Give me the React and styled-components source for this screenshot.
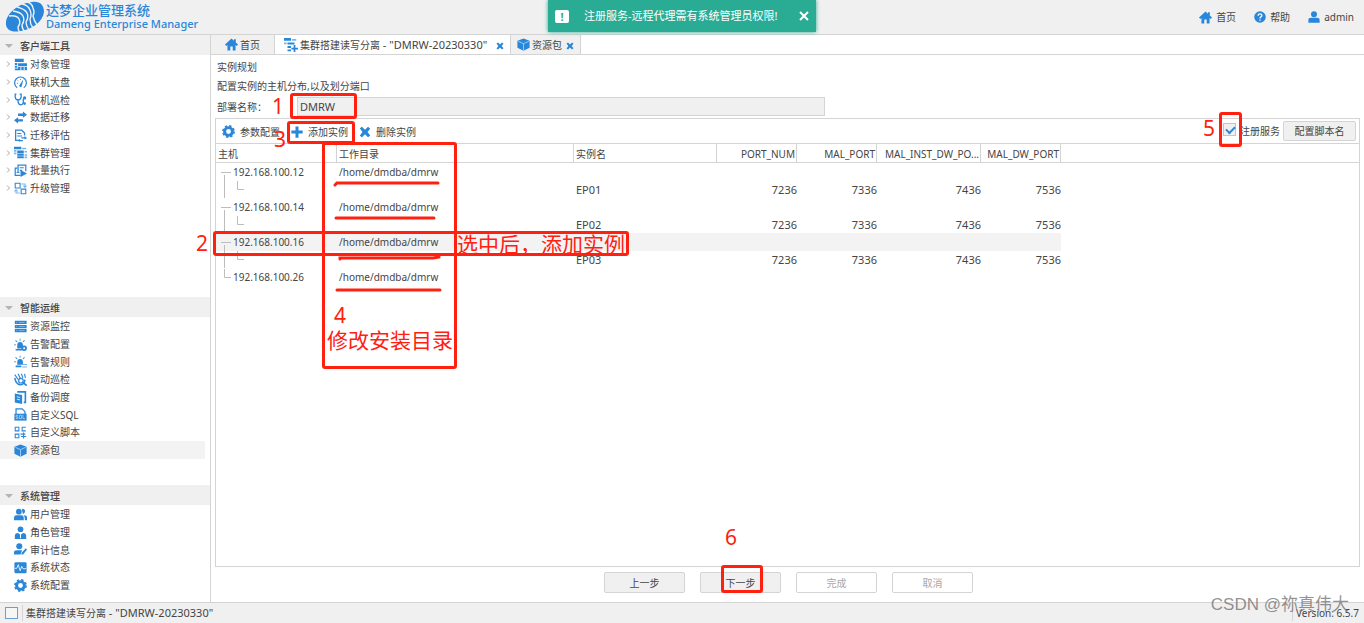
import React from 'react'
import styled, { createGlobalStyle } from 'styled-components';

const COLORS = {
    primary: '#2a86d8',
    light: '#7db5ea',
    text: '#454545',
    bar: '#f0f0f0',
    line: '#d4d4d4',
    mark: '#ff2010',
    toast: '#2aac94'
}

const GlobalStyle = createGlobalStyle`
    * { box-sizing: border-box; }
    body {
        margin: 0;
        background: #fff;
        color: ${COLORS.text};
        font: 10px/16px "Noto Sans", "Noto Sans CJK SC", sans-serif;
        white-space: nowrap;
    }
    button, input { font: inherit; color: inherit; }
    ul { list-style: none; margin: 0; padding: 0; }
    a { color: inherit; text-decoration: none; }
`;

// 16x16 drawings, blue strokes and fills
const GLYPHS = {
    home: <path d="M8 0.5 0 8 1.5 9.8 3 8.5V15.5H6.5V10.5H9.5V15.5H13V8.5L14.5 9.8 16 8 13.3 5.5V1.5H11V3.4Z" />,
    help: <>
        <circle cx="8" cy="8" r="7.7" />
        <path d="M5.5 6.2C5.5 2.8 10.6 3 10.5 6 10.4 7.8 8 7.8 8 10M8 11.3V13" fill="none" stroke="#fff" strokeWidth="1.7" />
    </>,
    user: <><circle cx="8" cy="4.2" r="4" /><path d="M0.5 15.5V12Q0.5 9 4 9H12Q15.5 9 15.5 12V15.5Z" /></>,
    object: <>
        <path d="M1 1H12V5H1ZM1 6H4V8.5H1ZM1 9.5H4V12H1ZM1 13H5V15H1ZM5 6.5H16V10H5ZM5 11H8V15H5ZM9 11H12V15H9ZM13 11H16V15H13Z" />
    </>,
    gauge: <>
        <path d="M4 14.4A7.2 7.2 0 1 1 12 14.4" fill="none" stroke={COLORS.primary} strokeWidth="1.5" />
        <path d="M6.3 12 11.5 4 9.5 13Q7.5 15 6.3 12Z" />
        <path d="M3.5 9H5M4.5 5.5 5.5 6.5M8 3.5V5" stroke={COLORS.primary} />
    </>,
    steth: <>
        <path d="M3 1.5H1.5V5Q2 8.5 5 8.5 8 8.5 8.8 5V1.5H7M5 8.5V11Q5.5 14.5 8.5 14.5 11.5 14 11.5 11V7" fill="none" stroke={COLORS.primary} strokeWidth="1.6" />
        <circle cx="13" cy="6" r="2" /><circle cx="13" cy="13" r="1.7" />
    </>,
    migrate: <path d="M5 3H11V0.5L16 4.5 11 8.3V6H5ZM11 10H5V7.7L0 11.5 5 15.5V13H11Z" />,
    evaluate: <>
        <path d="M8 14H2V1.5H9.5L13 5V8" fill="none" stroke={COLORS.primary} strokeWidth="1.6" />
        <path d="M4 5H9V6.3H4ZM4 8H10V9.3H4ZM9 10.2H13V8.5L16 11 13 13V11.7H9ZM11 13.5H7V12.3L4.5 14.3 7 16V15H11Z" />
    </>,
    cluster: <>
        <path d="M0 1H9V4H0ZM4 5.5H12V9H4ZM4 9.5H12V12H4ZM4 12.5H12V15H4Z" />
        <path d="M0 5H3V7H0ZM0 8H3V10H0ZM10 2H15V4H10ZM13 6H16V8H13ZM13 10H16V12H13ZM13 13H16V15H13Z" fill={COLORS.light} />
    </>,
    batch: <>
        <path d="M5 11V1.5H14.5V9M4 5H1.5V14H8" fill="none" stroke={COLORS.primary} strokeWidth="1.5" />
        <path d="M7 4H12V5.2H7ZM7 7H10V8.2H7ZM8 7.5 16 11.8 8 16ZM3 10H7V11H3Z" />
    </>,
    upgrade: <>
        <path d="M1.5 1.5H7.5V7.5H1.5ZM8.8 8.8H14.5V14.5H8.8Z" fill="none" stroke={COLORS.primary} strokeWidth="1.3" />
        <path d="M9 2.5H13.5V6M7 13.5H2.5V10M11.5 4.5 13.5 6.7 15.5 4.5M0.5 11.5 2.5 9.5 4.5 11.5" fill="none" stroke={COLORS.light} strokeWidth="1.3" />
    </>,
    server: <>
        <path d="M1 1H15.5V5H1ZM1 6H15.5V10H1ZM1 11H15.5V15H1Z" />
        <path d="M6 3H13M6 8H13M6 13H13M2.5 3H4M2.5 8H4M2.5 13H4" stroke="#9cc8f0" strokeWidth="0.8" />
    </>,
    alarm: <>
        <path d="M4 13V9Q4 5 7.5 5 11 5 11 9V13ZM2 13.5H10V15.5H2ZM7 1H8V3.5H7ZM2.3 2.5 4.5 4.5 3.7 5.2 1.5 3.4ZM12.5 2.5 13.4 3.3 11.3 5.2 10.6 4.5ZM0 8H2.5V9H0Z" />
        <circle cx="12.5" cy="12.5" r="2.3" fill="#fff" stroke={COLORS.primary} strokeWidth="2.2" />
    </>,
    rule: <>
        <path d="M4 12V9Q4 5 7.5 5 11 5 11 9V12ZM2 13H9V15H2ZM7 1H8V3.5H7ZM2.3 2.5 4.5 4.5 3.7 5.2 1.5 3.4ZM12.5 2.5 13.4 3.3 11.3 5.2 10.6 4.5ZM0 8H2.5V9H0Z" />
        <path d="M10 11H16V12.3H10ZM10 14H16V15.3H10Z" fill={COLORS.light} />
    </>,
    patrol: <>
        <path d="M1 6Q2 14 8 14.5 13 14 13.5 8" fill="none" stroke={COLORS.primary} strokeWidth="1.8" />
        <path d="M1 2 5 8M5 1 8 7M9 1 11 6M13 1 14 6" stroke={COLORS.primary} strokeWidth="1.4" />
        <circle cx="8.5" cy="9.5" r="2.8" fill="#fff" stroke={COLORS.primary} strokeWidth="1.5" /><path d="M11 11.5 15.5 15.5" stroke={COLORS.primary} strokeWidth="2" />
    </>,
    backup: <>
        <path d="M1 3 10 5V16L1 14Z" /><path d="M5 2V1H14V14H12" fill="none" stroke={COLORS.primary} strokeWidth="2" />
        <path d="M3.5 7 7.5 8M3.5 10 7.5 11" stroke="#fff" />
    </>,
    sql: <>
        <path d="M2.5 8V1H10L13.5 4.5V8" fill="none" stroke={COLORS.primary} strokeWidth="1.5" />
        <path d="M0.5 7H15.5V15.5H0.5Z" />
        <path d="M5 9H2.5V11H4.8V13H2.3M6.7 9H9.3V13H6.7ZM11 8.5V13H13.5" fill="none" stroke="#cfe4f8" strokeWidth="0.8" />
    </>,
    script: <path d="M1.5 1.5H6V6H1.5ZM1.5 10H6V14.5H1.5ZM14.5 1.5H10V6H14.5M8 10H14M11.8 8V15.5M8.5 13H15" fill="none" stroke={COLORS.primary} strokeWidth="1.3" />,
    box: <>
        <path d="M8 0.5 15.5 3.5V12L8 15.7 0.5 12V3.5Z" />
        <path d="M1.5 4 8 7 14.5 4M8 7V15.5" fill="none" stroke="#a9d0f3" strokeWidth="1.1" />
    </>,
    users: <>
        <circle cx="6" cy="4.5" r="3.5" /><path d="M0 15V12Q0 9 3 9H9Q12 9 12 12V15ZM10 1Q14 1 13.5 5 13 7 11 7.5 9.5 4 10 1ZM12 9Q16 9 16 12V15H13.5Q13.7 11 12 9Z" />
    </>,
    role: <><circle cx="8" cy="4" r="3.5" /><path d="M1 16V12Q1 8.7 5 8.5L8 11 11 8.5Q15 8.7 15 12V16Z" /><path d="M8 11V15" stroke="#fff" strokeWidth="1.3" /></>,
    audit: <><circle cx="6.5" cy="4" r="3.7" /><path d="M0 14V12Q0 9 3.5 9H10L8 14ZM9.5 12 14.5 6.5 16 8 11.5 13.8 9 14.5Z" /></>,
    status: <>
        <rect x="0.5" y="1.5" width="15" height="13.5" rx="1.5" />
        <path d="M1 9H3.5L5.3 4.5 7.5 12 9.5 6.5 11 9.5H15" fill="none" stroke="#fff" />
    </>,
    gear: <>
        <circle cx="8" cy="8" r="4.8" fill="none" stroke={COLORS.primary} strokeWidth="3.6" />
        <circle cx="8" cy="8" r="6.9" fill="none" stroke={COLORS.primary} strokeWidth="2" strokeDasharray="2.9 2.52" />
    </>,
    plus: <path d="M6 0.5H10V6H15.5V10H10V15.5H6V10H0.5V6H6Z" />,
    cross: <path d="M1 3 4 1 8 5 12 1 15 3.5 11.3 8 15 12.5 12 15 8 11 4 15 1 13 4.7 8Z" />,
    build: <>
        <path d="M0 0H8V3H0ZM4 5H12V7.5H4ZM4 9H8V11.5H4ZM4 13H8V15H4ZM11 8H13V11H16V13H13V16H11V13H8.5V11H11Z" />
        <path d="M0 5H3V7H0ZM9 1H14V3H9Z" fill={COLORS.light} />
    </>
}

const Glyph = ({ name, size = 12 }) => (
    <GlyphSvg $size={size} viewBox="0 0 16 16" fill={COLORS.primary} aria-hidden="true">{ GLYPHS[name] }</GlyphSvg>
)

const Logo = () => (
    <LogoSvg viewBox="0 0 40 32" aria-hidden="true">
        <path d="M1 21C2 12 14 2 27 1 35 0 39 4 39 11 38 20 28 28 16 30 7 32 0 29 1 21Z" fill={COLORS.primary} />
        <g fill="none" stroke={COLORS.bar} strokeWidth="1.4">
            <path d="M4 15Q12 14 14 18 16 22 13 26 13 29 15 32" />
            <path d="M8 10Q16 11 18 15 20 19 17 24 17 28 20 31" />
            <path d="M12 6Q20 8 22 12 24 16 21 21 21 25 24 29" />
            <path d="M17 3Q23 4 25 9 27 14 25 18 25 23 28 27" />
            <path d="M22 1Q27 2 28 7 30 11 28 15 29 20 32 24" />
        </g>
    </LogoSvg>
)

const SECTIONS = [
    {
        title: '客户端工具', grow: 262, expandable: true,
        items: [
            ['object', '对象管理'], ['gauge', '联机大盘'], ['steth', '联机巡检'], ['migrate', '数据迁移'],
            ['evaluate', '迁移评估'], ['cluster', '集群管理'], ['batch', '批量执行'], ['upgrade', '升级管理']
        ]
    },
    {
        title: '智能运维', grow: 188,
        items: [
            ['server', '资源监控'], ['alarm', '告警配置'], ['rule', '告警规则'], ['patrol', '自动巡检'],
            ['backup', '备份调度'], ['sql', '自定义SQL'], ['script', '自定义脚本'], ['box', '资源包']
        ]
    },
    {
        title: '系统管理', grow: 117,
        items: [
            ['users', '用户管理'], ['role', '角色管理'], ['audit', '审计信息'], ['status', '系统状态'], ['gear', '系统配置']
        ]
    }
]

const HOSTS = [
    { ip: '192.168.100.12', instance: 'EP01' },
    { ip: '192.168.100.14', instance: 'EP02' },
    { ip: '192.168.100.16', instance: 'EP03', selected: true },
    { ip: '192.168.100.26' }
]

const Sidebar = () => (
    <Aside>
        { SECTIONS.map(({ title, grow, expandable, items }) => (
            <Section key={title} $grow={grow}>
                <SectionTitle><Triangle />{ title }</SectionTitle>
                <ul>
                    { items.map(([icon, label]) => (
                        <Item key={label} $selected={label === '资源包'}>
                            <Chevron viewBox="0 0 6 8" aria-hidden="true">
                                { expandable && <path d="M2 1.5 4.5 4 2 6.5" /> }
                            </Chevron>
                            <Glyph name={icon} size={13} />
                            <a href="#">{ label }</a>
                        </Item>
                    )) }
                </ul>
            </Section>
        )) }
    </Aside>
)

const InstanceTable = () => (
    <Table>
        <colgroup>
            <Col $w={121} /><Col $w={237} /><Col $w={143} /><Col $w={80} />
            <Col $w={80} /><Col $w={104} /><Col $w={80} /><col />
        </colgroup>
        <thead>
            <tr>
                <Th>主机</Th>
                <Th>工作目录</Th>
                <Th>实例名</Th>
                <Th $num>PORT_NUM</Th>
                <Th $num>MAL_PORT</Th>
                <Th $num>MAL_INST_DW_PO...</Th>
                <Th $num>MAL_DW_PORT</Th>
                <Th $filler />
            </tr>
        </thead>
        <tbody>
            { HOSTS.map(({ ip, instance, selected }) => (
                <React.Fragment key={ip}>
                    <Row $selected={selected}>
                        <Td>
                            <Host>
                                <Branch viewBox="0 0 16 17" aria-hidden="true">
                                    <path d={instance ? 'M8.5 11V17M5 8.5H15' : 'M8.5 0V8.5H15'} />
                                </Branch>
                                { ip }
                            </Host>
                        </Td>
                        <Td>/home/dmdba/dmrw</Td>
                        <Td /><Td /><Td /><Td /><Td />
                    </Row>
                    { instance &&
                        <Row>
                            <Td>
                                <Host>
                                    <Branch $wide viewBox="0 0 32 17" aria-hidden="true">
                                        <path d="M8.5 0V17M21.5 0V8.5H28" />
                                    </Branch>
                                </Host>
                            </Td>
                            <Td />
                            <Td $large>{ instance }</Td>
                            <Td $num>7236</Td>
                            <Td $num>7336</Td>
                            <Td $num>7436</Td>
                            <Td $num>7536</Td>
                        </Row>
                    }
                </React.Fragment>
            )) }
        </tbody>
    </Table>
)

// red boxes, numbers and strokes drawn over the screen
const Annotations = () => (
    <>
        <Box $x={290} $y={93} $w={67} $h={26} />
        <Box $x={287} $y={121} $w={68} $h={23} />
        <Box $x={322} $y={142} $w={135} $h={227} />
        <Box $x={213} $y={231} $w={416} $h={25} />
        <Box $right={122} $y={112} $w={23} $h={35} />
        <Note $x={272} $y={94}>1</Note>
        <Note $x={196} $y={231}>2</Note>
        <Note $x={274} $y={127}>3</Note>
        <Note $x={334} $y={303}>4</Note>
        <Note $right={149} $y={116}>5</Note>
        <Note $x={327} $y={328}>修改安装目录</Note>
        <Note $x={457} $y={232}>选中后，添加实例</Note>
        <Strokes viewBox="0 0 110 120" aria-hidden="true">
            <path d="M2 5 4 3H105M3 38H101M7 79V78H100L106 77M4 110H107" />
        </Strokes>
    </>
)

export default function App() {
    return (
        <Page>
            <GlobalStyle />
            <Header>
                <Brand>
                    <Logo />
                    <div>
                        <BrandName>达梦企业管理系统</BrandName>
                        <BrandLatin>Dameng Enterprise Manager</BrandLatin>
                    </div>
                </Brand>
                <TopLinks>
                    <TopLink href="#"><Glyph name="home" size={13} />首页</TopLink>
                    <TopLink href="#"><Glyph name="help" />帮助</TopLink>
                    <TopLink href="#"><Glyph name="user" />admin</TopLink>
                </TopLinks>
            </Header>
            <Body>
                <Sidebar />
                <Main>
                    <Tabs>
                        <Tab $w={64}><Glyph name="home" size={13} />首页</Tab>
                        <Tab $active $w={236}>
                            <Glyph name="build" size={14} />
                            <TabText>集群搭建读写分离<Latin> - "DMRW-20230330"</Latin></TabText>
                            <Close aria-label="关闭"><Glyph name="cross" size={8} /></Close>
                        </Tab>
                        <Tab $w={70}>
                            <Glyph name="box" size={13} />
                            <TabText>资源包</TabText>
                            <Close aria-label="关闭"><Glyph name="cross" size={8} /></Close>
                        </Tab>
                    </Tabs>
                    <Content>
                        <Line>实例规划</Line>
                        <Line>配置实例的主机分布,以及划分端口</Line>
                        <Field>
                            <label htmlFor="deploy">部署名称：</label>
                            <TextInput id="deploy" defaultValue="DMRW" readOnly />
                        </Field>
                        <Panel>
                            <Toolbar>
                                <Tool><Glyph name="gear" size={13} />参数配置</Tool>
                                <Tool><Glyph name="plus" />添加实例</Tool>
                                <Tool><Glyph name="cross" />删除实例</Tool>
                                <Spacer />
                                <Check><input type="checkbox" defaultChecked />注册服务</Check>
                                <SmallButton>配置脚本名</SmallButton>
                            </Toolbar>
                            <InstanceTable />
                        </Panel>
                        <Actions>
                            <Button>上一步</Button>
                            <Button>
                                下一步
                                <StepBox />
                                <StepNumber>6</StepNumber>
                            </Button>
                            <Button disabled>完成</Button>
                            <Button disabled>取消</Button>
                        </Actions>
                    </Content>
                </Main>
            </Body>
            <StatusBar>
                <Square />
                <StatusText>集群搭建读写分离<Latin> - "DMRW-20230330"</Latin></StatusText>
                <Spacer />
                <StatusText>Version: 6.5.7</StatusText>
            </StatusBar>
            <Toast role="alert">
                <Bang>!</Bang>
                <span>注册服务-远程代理需有系统管理员权限!</span>
                <ToastClose aria-label="关闭">
                    <svg viewBox="0 0 10 10" width="10" height="10"><path d="M1 1 9 9M9 1 1 9" stroke="#fff" strokeWidth="2" /></svg>
                </ToastClose>
            </Toast>
            <Annotations />
            <Watermark>CSDN @祢真伟大</Watermark>
        </Page>
    )
}

const Page = styled.div`
    position: relative;
    display: flex;
    flex-direction: column;
    min-height: 100vh;
    overflow: hidden;
`;

const GlyphSvg = styled.svg`
    flex: none;
    width: ${p => p.$size}px;
    height: ${p => p.$size}px;
`;

const Latin = styled.span`
    font-size: 11px;
    white-space: pre;
`;

const Spacer = styled.div`
    flex: 1;
`;

const Header = styled.header`
    display: flex;
    justify-content: space-between;
    height: 35px;
    padding: 0 10px 0 5px;
    background: ${COLORS.bar};
    border-bottom: 1px solid ${COLORS.line};
`;

const Brand = styled.div`
    display: flex;
    align-items: center;
    gap: 1px;
    color: ${COLORS.primary};
`;

const LogoSvg = styled.svg`
    width: 40px;
    height: 32px;
`;

const BrandName = styled.div`
    font-size: 13px;
    line-height: 14px;
    font-weight: 500;
`;

const BrandLatin = styled.div`
    font-size: 11px;
    line-height: 14px;
    font-weight: 500;
`;

const TopLinks = styled.nav`
    display: flex;
    align-items: center;
    gap: 18px;
`;

const TopLink = styled.a`
    display: flex;
    align-items: center;
    gap: 4px;
`;

const Body = styled.div`
    display: flex;
    flex: 1;
`;

const Aside = styled.aside`
    display: flex;
    flex-direction: column;
    flex: none;
    width: 211px;
    border-right: 1px solid ${COLORS.line};
`;

const Section = styled.section`
    flex: ${p => p.$grow} 1 0;
`;

const SectionTitle = styled.h2`
    display: flex;
    align-items: center;
    gap: 7px;
    height: 20px;
    margin: 0;
    padding: 2px 0 0 5px;
    background: ${COLORS.bar};
    font-size: 10px;
    font-weight: 500;
`;

const Triangle = styled.i`
    border: 4px solid transparent;
    border-top-color: #b4b4b4;
    border-bottom: 0;
`;

const Item = styled.li`
    display: flex;
    align-items: center;
    gap: 3px;
    height: 18px;
    margin-right: 5px;
    padding-left: 5px;
    background: ${p => p.$selected ? '#f3f3f3' : 'none'};

    &:nth-child(3n) { height: 17px; }
`;

const Chevron = styled.svg`
    width: 6px;
    height: 8px;
    fill: none;
    stroke: #a8a8a8;
`;

const Main = styled.main`
    display: flex;
    flex-direction: column;
    flex: 1;
    min-width: 0;
`;

const Tabs = styled.div`
    display: flex;
    height: 20px;
    border-bottom: 1px solid ${COLORS.line};
`;

const Tab = styled.div`
    display: flex;
    align-items: center;
    gap: 2px;
    width: ${p => p.$w}px;
    padding: ${p => p.$active ? '0 6px 0 9px' : '0 6px'};
    background: ${p => p.$active ? '#fff' : COLORS.bar};
    border-right: 1px solid ${COLORS.line};

    &:first-child { padding-left: 14px; }
`;

const TabText = styled.span`
    flex: 1;
`;

const Close = styled.button`
    display: flex;
    padding: 3px 0 0;
    border: 0;
    background: none;
`;

const Content = styled.div`
    display: flex;
    flex-direction: column;
    flex: 1;
    padding: 3px 4px 9px;
`;

const Line = styled.div`
    height: 19px;
    padding-left: 2px;
    line-height: 18px;
`;

const Field = styled.div`
    display: flex;
    align-items: center;
    height: 21px;
    margin-bottom: 1px;
    padding-left: 2px;

    label { width: 80px; }
`;

const TextInput = styled.input`
    width: 528px;
    height: 19px;
    padding: 0 2px;
    border: 1px solid ${COLORS.line};
    background: ${COLORS.bar};
    font-size: 11px;
`;

const Panel = styled.div`
    flex: 1;
    border: 1px solid ${COLORS.line};
`;

const Toolbar = styled.div`
    display: flex;
    align-items: center;
    gap: 11px;
    height: 25px;
    padding: 0 3px 0 6px;
    border-bottom: 1px solid ${COLORS.line};
`;

const Tool = styled.button`
    display: flex;
    align-items: center;
    gap: 5px;
    padding: 1px 0 0;
    border: 0;
    background: none;
`;

const Check = styled.label`
    display: flex;
    align-items: flex-start;
    gap: 4px;
    margin-right: -8px;

    input {
        appearance: none;
        width: 13px;
        height: 13px;
        margin: 0;
        border: 1px solid #c4c4c4;
        background: ${COLORS.bar};
    }

    input:checked::before {
        content: '';
        display: block;
        width: 7px;
        height: 4px;
        margin: 2px;
        border: solid ${COLORS.primary};
        border-width: 0 0 2px 2px;
        transform: rotate(-45deg);
    }
`;

const SmallButton = styled.button`
    width: 73px;
    height: 20px;
    padding: 0;
    border: 1px solid ${COLORS.line};
    border-radius: 2px;
    background: ${COLORS.bar};
`;

const Table = styled.table`
    width: 100%;
    table-layout: fixed;
    border-collapse: separate;
    border-spacing: 0;
    font-size: 10px;
`;

const Col = styled.col`
    width: ${p => p.$w}px;
`;

const Th = styled.th`
    height: 19px;
    padding: ${p => p.$num ? '2px 1px 0' : '2px 2px 0'};
    overflow: hidden;
    text-overflow: ellipsis;
    border-bottom: 1px solid ${COLORS.line};
    border-right: ${p => p.$filler ? '0' : `1px solid ${COLORS.line}`};
    font-weight: 400;
    text-align: ${p => p.$num ? 'right' : 'left'};
`;

const Row = styled.tr`
    height: 17px;
    background: ${p => p.$selected ? '#f3f3f3' : 'none'};

    &:nth-child(odd) { height: 18px; }
`;

const Td = styled.td`
    padding: ${p => p.$num ? '0' : '0 0 0 2px'};
    font-size: ${p => p.$num || p.$large ? 11 : 10}px;
    line-height: 17px;
    text-align: ${p => p.$num ? 'right' : 'left'};
`;

const Host = styled.div`
    display: flex;
    gap: 1px;
    margin-left: -2px;
`;

const Branch = styled.svg`
    width: ${p => p.$wide ? 32 : 16}px;
    height: 17px;
    fill: none;
    stroke: #bdbdbd;
`;

const Actions = styled.div`
    display: flex;
    justify-content: center;
    gap: 15px;
    padding: 5px 0 0 2px;
`;

const Button = styled.button`
    position: relative;
    width: 81px;
    height: 21px;
    padding: 0;
    border: 1px solid ${COLORS.line};
    border-radius: 2px;
    background: ${COLORS.bar};

    &:disabled {
        background: #fff;
        color: #a8a8a8;
    }
`;

const StatusBar = styled.footer`
    display: flex;
    align-items: center;
    height: 21px;
    padding: 0 5px;
    background: ${COLORS.bar};
    border-top: 1px solid ${COLORS.line};
`;

const Square = styled.i`
    width: 13px;
    height: 12px;
    margin-right: 4px;
    border: 1px solid #6c9fd0;
    background: #f6f6f6;
`;

const StatusText = styled.span`
    padding-left: 3px;
    border-left: 1px solid ${COLORS.line};
`;

const Toast = styled.div`
    position: absolute;
    top: 0;
    left: 50%;
    display: flex;
    align-items: center;
    gap: 15px;
    width: 268px;
    height: 32px;
    padding: 0 7px;
    background: ${COLORS.toast};
    color: #fff;
    font-size: 11px;
    box-shadow: 0 0 4px ${COLORS.toast};
    transform: translateX(-50%);
`;

const Bang = styled.b`
    width: 14px;
    height: 13px;
    border-radius: 2px;
    background: #fff;
    color: ${COLORS.toast};
    line-height: 13px;
    text-align: center;
`;

const ToastClose = styled.button`
    display: flex;
    margin-left: auto;
    padding: 0;
    border: 0;
    background: none;
`;

const Box = styled.div`
    position: absolute;
    top: ${p => p.$y}px;
    ${p => p.$right ? `right: ${p.$right}px` : `left: ${p.$x}px`};
    width: ${p => p.$w}px;
    height: ${p => p.$h}px;
    border: 3px solid ${COLORS.mark};
    border-radius: 3px;
    pointer-events: none;
`;

const Note = styled.div`
    position: absolute;
    top: ${p => p.$y}px;
    ${p => p.$right ? `right: ${p.$right}px` : `left: ${p.$x}px`};
    color: ${COLORS.mark};
    font-size: 21px;
    line-height: 24px;
    pointer-events: none;
`;

const StepBox = styled.i`
    position: absolute;
    top: -8px;
    left: 20px;
    width: 42px;
    height: 28px;
    border: 3px solid ${COLORS.mark};
    border-radius: 3px;
`;

const StepNumber = styled.span`
    position: absolute;
    top: -48px;
    left: 24px;
    color: ${COLORS.mark};
    font-size: 21px;
    line-height: 24px;
`;

const Strokes = styled.svg`
    position: absolute;
    top: 180px;
    left: 333px;
    width: 110px;
    height: 120px;
    fill: none;
    stroke: ${COLORS.mark};
    stroke-width: 3;
    stroke-linecap: round;
    pointer-events: none;
`;

const Watermark = styled.div`
    position: absolute;
    right: 15px;
    bottom: 6px;
    color: rgba(110, 110, 110, 0.75);
    font: 17px/24px "Liberation Sans", "Noto Sans CJK SC", sans-serif;
`;
